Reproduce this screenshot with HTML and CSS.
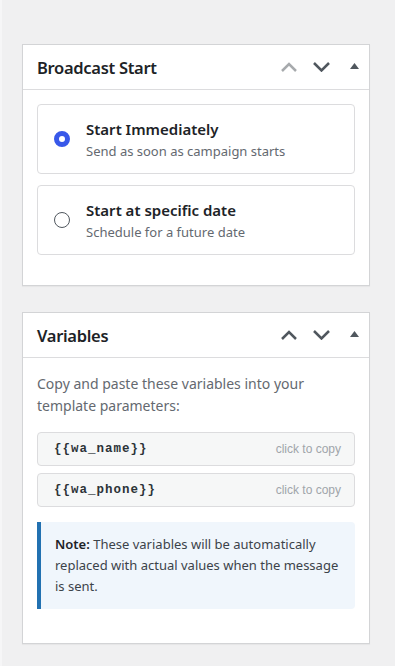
FILE: index.html
```html
<!DOCTYPE html>
<html lang="en">
<head>
<meta charset="utf-8">
<title>Broadcast settings</title>
<link rel="stylesheet" href="styles.css">
</head>
<body>
<div class="sidebar">
  <section class="postbox">
    <header class="postbox-header">
      <h2 class="postbox-title">Broadcast Start</h2>
      <div class="handle-actions">
        <svg class="chev chev-disabled" width="16" height="10" viewBox="0 0 16 10"><polyline points="1,9 8,2 15,9" /></svg>
        <svg class="chev" width="17" height="10" viewBox="0 0 17 10"><polyline points="1,1 8.5,8.5 16,1" /></svg>
        <svg class="tri" width="9" height="6" viewBox="0 0 9 6"><polygon points="4.5,0 9,6 0,6" /></svg>
      </div>
    </header>
    <div class="postbox-body">
      <label class="option">
        <span class="radio radio-checked"></span>
        <span class="option-text">
          <span class="option-title">Start Immediately</span>
          <span class="option-desc">Send as soon as campaign starts</span>
        </span>
      </label>
      <label class="option">
        <span class="radio"></span>
        <span class="option-text">
          <span class="option-title">Start at specific date</span>
          <span class="option-desc">Schedule for a future date</span>
        </span>
      </label>
    </div>
  </section>

  <section class="postbox">
    <header class="postbox-header">
      <h2 class="postbox-title">Variables</h2>
      <div class="handle-actions">
        <svg class="chev" width="16" height="10" viewBox="0 0 16 10"><polyline points="1,9 8,2 15,9" /></svg>
        <svg class="chev" width="17" height="10" viewBox="0 0 17 10"><polyline points="1,1 8.5,8.5 16,1" /></svg>
        <svg class="tri" width="9" height="6" viewBox="0 0 9 6"><polygon points="4.5,0 9,6 0,6" /></svg>
      </div>
    </header>
    <div class="postbox-body vars-body">
      <p class="vars-intro">Copy and paste these variables into your template parameters:</p>
      <div class="var-list">
        <div class="var-item"><code class="var-code">{{wa_name}}</code><span class="var-hint">click to copy</span></div>
        <div class="var-item"><code class="var-code">{{wa_phone}}</code><span class="var-hint">click to copy</span></div>
      </div>
      <div class="note"><strong>Note:</strong> These variables will be automatically replaced with actual values when the message is sent.</div>
    </div>
  </section>
</div>
</body>
</html>
```

FILE: styles.css
```css
* { box-sizing: border-box; }

html, body {
  margin: 0;
  padding: 0;
  background: #f0f0f1;
}

body {
  font-family: "Noto Sans", "Open Sans", sans-serif;
  color: #1d2327;
  border-left: 2px solid #f6f6f7;
}

.sidebar {
  display: flex;
  flex-direction: column;
  gap: 26px;
  padding: 44px 25px 24px 20px;
}

.postbox {
  background: #fff;
  border: 1px solid #d3d4d6;
  box-shadow: 0 1px 1px rgba(0, 0, 0, 0.04);
}

.postbox-header {
  display: flex;
  align-items: center;
  justify-content: space-between;
  height: 45px;
  padding: 0 10px 0 14px;
  border-bottom: 1px solid #dcdcde;
}

.postbox-title {
  margin: 0;
  font-size: 16.5px;
  font-weight: 600;
  letter-spacing: -0.3px;
  color: #1d2327;
}

.handle-actions {
  display: flex;
  align-items: center;
  gap: 16px;
}

.chev polyline {
  fill: none;
  stroke: #50575e;
  stroke-width: 2.5;
  stroke-linecap: butt;
  stroke-linejoin: miter;
}

.chev-disabled polyline { stroke: #a7aaad; }

.tri { margin-left: 4px; margin-top: -3px; }
.tri polygon { fill: #50575e; }

.postbox-body {
  display: flex;
  flex-direction: column;
  gap: 11px;
  padding: 14px 14px 30px;
}

.option {
  display: flex;
  align-items: center;
  gap: 16px;
  min-height: 70px;
  padding: 12px 16px;
  border: 1px solid #dcdcde;
  border-radius: 4px;
}

.radio {
  flex: none;
  width: 16px;
  height: 16px;
  border-radius: 50%;
  border: 1.5px solid #50575e;
  background: #fff;
}

.radio-checked {
  border: 5px solid #3858e9;
}

.option-text {
  display: flex;
  flex-direction: column;
  gap: 3px;
}

.option-title {
  font-size: 15px;
  font-weight: 600;
  line-height: 20px;
  color: #1d2327;
}

.option-desc {
  font-size: 13px;
  line-height: 18px;
  color: #646970;
}

.vars-body {
  gap: 0;
  padding: 15px 14px 34px;
}

.vars-intro {
  margin: 0 0 15px;
  font-size: 14px;
  line-height: 22px;
  color: #646970;
}

.var-list {
  display: flex;
  flex-direction: column;
  gap: 7px;
  margin-bottom: 15px;
}

.var-item {
  display: flex;
  align-items: center;
  justify-content: space-between;
  height: 34px;
  padding: 0 13px 0 16px;
  background: #f6f7f7;
  border: 1px solid #dcdcde;
  border-radius: 4px;
}

.var-code {
  font-family: "Liberation Mono", "Courier New", monospace;
  font-weight: 700;
  font-size: 12.5px;
  letter-spacing: 1px;
  color: #2c3338;
}

.var-hint {
  font-family: "Liberation Sans", Arial, sans-serif;
  font-size: 12px;
  color: #a0a5aa;
}

.note {
  padding: 12px 14px 12px 14px;
  background: #f0f6fc;
  border-left: 4px solid #2271b1;
  border-radius: 0 4px 4px 0;
  font-size: 13px;
  line-height: 21px;
  color: #3c434a;
}

.note strong {
  font-weight: 600;
  color: #1d2327;
}
```
